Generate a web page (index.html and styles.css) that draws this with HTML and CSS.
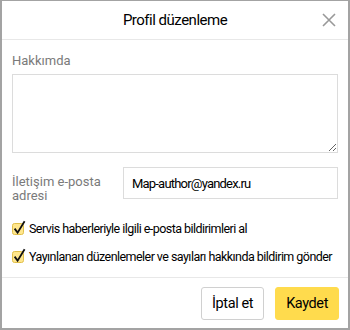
FILE: index.html
```html
<!DOCTYPE html>
<html lang="tr">
<head>
    <meta charset="UTF-8">
    <title>Profil düzenleme</title>
    <link rel="stylesheet" href="styles.css">
</head>
<body>
    <div class="dialog">
        <div class="dialog-header">
            <span></span>
            <h1>Profil düzenleme</h1>
            <button class="close" aria-label="Kapat">
                <svg width="14" height="14" viewBox="0 0 14 14"><path d="M1 1 L13 13 M13 1 L1 13" stroke="#999" stroke-width="1.6" fill="none"/></svg>
            </button>
        </div>

        <div class="dialog-body">
            <label class="field-label" for="about">Hakkımda</label>
            <textarea id="about"></textarea>

            <div class="field-row">
                <label class="field-label inline" for="email">İletişim e-posta adresi</label>
                <input id="email" type="text" value="Map-author@yandex.ru">
            </div>

            <div class="checks">
                <label class="check">
                    <svg class="box" width="16" height="16" viewBox="0 0 16 16"><rect x="0.5" y="3.5" width="11" height="11" rx="2" fill="#ffe68c" stroke="#e0bf4a"/><path d="M2.6 8.6 L5.6 12.6 L12.6 1.2" stroke="#111" stroke-width="1.8" fill="none"/></svg>
                    Servis haberleriyle ilgili e-posta bildirimleri al
                </label>
                <label class="check">
                    <svg class="box" width="16" height="16" viewBox="0 0 16 16"><rect x="0.5" y="3.5" width="11" height="11" rx="2" fill="#ffe68c" stroke="#e0bf4a"/><path d="M2.6 8.6 L5.6 12.6 L12.6 1.2" stroke="#111" stroke-width="1.8" fill="none"/></svg>
                    Yayınlanan düzenlemeler ve sayıları hakkında bildirim gönder
                </label>
            </div>
        </div>

        <div class="dialog-footer">
            <button class="btn">İptal et</button>
            <button class="btn btn-primary">Kaydet</button>
        </div>
    </div>
</body>
</html>
```

FILE: styles.css
```css
body {
    margin: 0;
    font-family: Roboto, 'Open Sans', sans-serif;
    color: #000;
    background-color: white;
}

.dialog {
    width: 350px;
    height: 330px;
    box-sizing: border-box;
    border: 2px solid #a3a3a3;
    border-top-width: 1px;
    display: flex;
    flex-direction: column;
}

.dialog-header {
    height: 38px;
    display: grid;
    grid-template-columns: 1fr auto 1fr;
    align-items: center;
    border-bottom: 1px solid #e8e8e8;
}

.dialog-header h1 {
    margin: 0;
    font-size: 15px;
    font-weight: normal;
    letter-spacing: -0.5px;
}

.close {
    justify-self: end;
    margin-right: 12px;
    padding: 0;
    border: none;
    background: none;
    display: flex;
}

.dialog-body {
    flex: 1;
    padding: 14px 10px 0 10px;
}

.field-label {
    display: block;
    font-size: 13px;
    color: #7a7a7a;
    line-height: 14px;
}

textarea {
    display: block;
    box-sizing: border-box;
    width: 326px;
    height: 79px;
    margin: 6px 0 0 0;
    border: 1px solid #dcdcdc;
    resize: vertical;
    outline: none;
}

.field-row {
    display: flex;
    align-items: flex-start;
    margin-top: 14px;
}

.field-label.inline {
    width: 111px;
    padding-top: 8px;
}

input {
    flex: 1;
    box-sizing: border-box;
    height: 32px;
    margin: 0;
    padding: 0 8px;
    border: 1px solid #dcdcdc;
    font-family: inherit;
    font-size: 13px;
    letter-spacing: -0.8px;
    color: #000;
    outline: none;
}

.checks {
    margin-top: 11px;
}

.check {
    display: flex;
    align-items: center;
    gap: 1px;
    font-size: 12.5px;
    letter-spacing: -0.55px;
    white-space: nowrap;
    height: 28px;
}

.box {
    flex-shrink: 0;
}

.dialog-footer {
    height: 50px;
    border-top: 1px solid #e8e8e8;
    display: flex;
    justify-content: flex-end;
    align-items: center;
    gap: 11px;
    padding-right: 9px;
}

.btn {
    height: 33px;
    padding: 0 10px;
    border: 1px solid #d0d0d0;
    border-radius: 3px;
    background-color: white;
    font-family: inherit;
    font-size: 14.5px;
    letter-spacing: -0.4px;
    color: #000;
}

.btn-primary {
    border-color: #ffdb4d;
    background-color: #ffdb4d;
}
```
